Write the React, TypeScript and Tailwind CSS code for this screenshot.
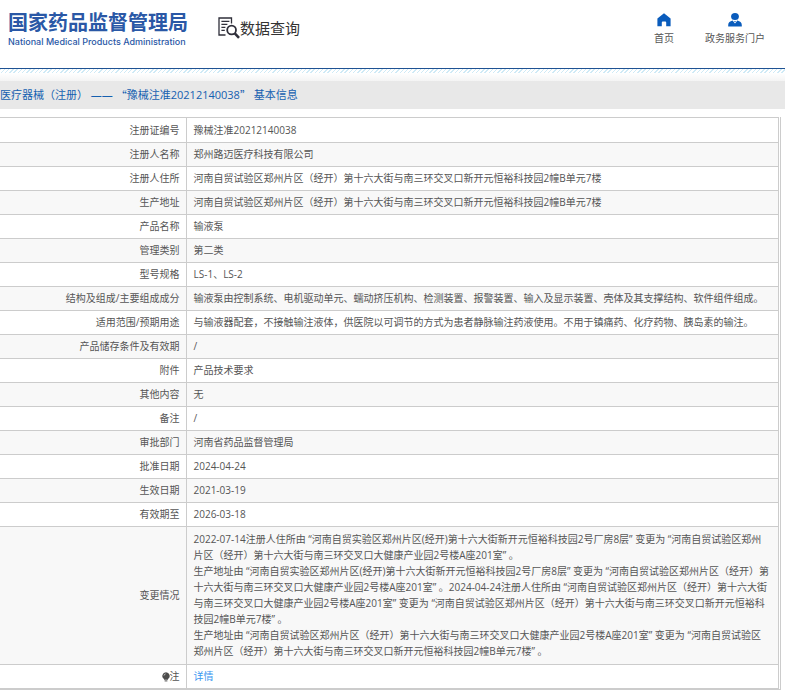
type Row = {
  label: string;
  value: string[];
};

const rows: Row[] = [
  { label: '注册证编号', value: ['豫械注准20212140038'] },
  { label: '注册人名称', value: ['郑州路迈医疗科技有限公司'] },
  { label: '注册人住所', value: ['河南自贸试验区郑州片区（经开）第十六大街与南三环交叉口新开元恒裕科技园2幢B单元7楼'] },
  { label: '生产地址', value: ['河南自贸试验区郑州片区（经开）第十六大街与南三环交叉口新开元恒裕科技园2幢B单元7楼'] },
  { label: '产品名称', value: ['输液泵'] },
  { label: '管理类别', value: ['第二类'] },
  { label: '型号规格', value: ['LS-1、LS-2'] },
  {
    label: '结构及组成/主要组成成分',
    value: ['输液泵由控制系统、电机驱动单元、蠕动挤压机构、检测装置、报警装置、输入及显示装置、壳体及其支撑结构、软件组件组成。'],
  },
  {
    label: '适用范围/预期用途',
    value: ['与输液器配套，不接触输注液体，供医院以可调节的方式为患者静脉输注药液使用。不用于镇痛药、化疗药物、胰岛素的输注。'],
  },
  { label: '产品储存条件及有效期', value: ['/'] },
  { label: '附件', value: ['产品技术要求'] },
  { label: '其他内容', value: ['无'] },
  { label: '备注', value: ['/'] },
  { label: '审批部门', value: ['河南省药品监督管理局'] },
  { label: '批准日期', value: ['2024-04-24'] },
  { label: '生效日期', value: ['2021-03-19'] },
  { label: '有效期至', value: ['2026-03-18'] },
  {
    label: '变更情况',
    value: [
      '2022-07-14注册人住所由 “河南自贸实验区郑州片区(经开)第十六大街新开元恒裕科技园2号厂房8层” 变更为 “河南自贸试验区郑州片区（经开）第十六大街与南三环交叉口大健康产业园2号楼A座201室” 。',
      '生产地址由 “河南自贸实验区郑州片区(经开)第十六大街新开元恒裕科技园2号厂房8层” 变更为 “河南自贸试验区郑州片区（经开）第十六大街与南三环交叉口大健康产业园2号楼A座201室” 。2024-04-24注册人住所由 “河南自贸试验区郑州片区（经开）第十六大街与南三环交叉口大健康产业园2号楼A座201室” 变更为 “河南自贸试验区郑州片区（经开）第十六大街与南三环交叉口新开元恒裕科技园2幢B单元7楼” 。',
      '生产地址由 “河南自贸试验区郑州片区（经开）第十六大街与南三环交叉口大健康产业园2号楼A座201室” 变更为 “河南自贸试验区郑州片区（经开）第十六大街与南三环交叉口新开元恒裕科技园2幢B单元7楼” 。',
    ],
  },
];

function HomeIcon() {
  return (
    <svg width="14" height="14" viewBox="0 0 14 14" fill="#0a5cbc" aria-hidden="true">
      <path d="M7 0.3 13.6 5.4V13.3H9.2V9.6a1 1 0 0 0-1-1H5.8a1 1 0 0 0-1 1v3.7H0.4V5.4z" />
    </svg>
  );
}

function UserIcon() {
  return (
    <svg width="14" height="14" viewBox="0 0 14 14" fill="#0a5cbc" aria-hidden="true">
      <ellipse cx="7" cy="3.6" rx="3.9" ry="3.5" />
      <path d="M0.2 13.6V12C0.2 9.8 2 8.2 4.6 7.6L7 10.4 9.4 7.6C12 8.2 13.8 9.8 13.8 12v1.6z" />
      <path d="M6 7.9h2L7 9.3z" />
    </svg>
  );
}

function SearchDocIcon() {
  return (
    <svg width="22" height="22" viewBox="0 0 22 22" fill="none" stroke="#2f2f3a" aria-hidden="true">
      <path d="M13.5 6.5V1H1v17h6.5" strokeWidth="1.3" />
      <path d="M3.4 4.4h8M3.4 7.4h6M3.4 10.4h4M3.4 13.4h3.4" strokeWidth="1.3" />
      <circle cx="13.6" cy="13" r="4.4" strokeWidth="1.8" />
      <path d="M16.8 16.4 21 20.8" strokeWidth="2.6" />
    </svg>
  );
}

function BulbIcon() {
  return (
    <svg className="inline-block" width="8" height="10" viewBox="0 0 8 10" aria-hidden="true">
      <path d="M4 0.3a3.7 3.7 0 0 1 2 6.8v0.7H2V7.1A3.7 3.7 0 0 1 4 0.3z" fill="#4c4c4c" />
      <path d="M2.6 8.9h2.8" stroke="#4c4c4c" />
      <path d="M2 3.6a2 2 0 0 1 1.6-1.7" stroke="#ddd" strokeWidth="0.8" fill="none" />
    </svg>
  );
}

export default function App() {
  return (
    <div className="min-h-screen overflow-x-hidden bg-white font-['Open_Sans','Noto_Sans_CJK_SC',sans-serif] text-[10px] leading-4 text-[#555]">
      <header className="flex h-[69px] items-start justify-between border-b border-[#1f5293] pr-5 pl-2">
        <div className="flex items-start gap-[30px]">
          <a href="#" className="block pt-[9px] text-[#2a58a6]">
            <span className="block text-[20px] leading-7 font-bold whitespace-nowrap">国家药品监督管理局</span>
            <span className="block font-[Inter,sans-serif] text-[9px] leading-[10px] font-medium whitespace-nowrap">
              National Medical Products Administration
            </span>
          </a>
          <h1 className="flex items-center pt-4 text-[15px] leading-6 whitespace-nowrap text-[#333]">
            <SearchDocIcon />
            数据查询
          </h1>
        </div>
        <nav className="flex gap-[31px] pt-[13px]">
          <a href="#" className="flex flex-col items-center gap-[3px] whitespace-nowrap">
            <HomeIcon />
            首页
          </a>
          <a href="#" className="flex flex-col items-center gap-[3px] whitespace-nowrap">
            <UserIcon />
            政务服务门户
          </a>
        </nav>
      </header>
      <div className="h-1 bg-[repeating-linear-gradient(135deg,#cfeaf6_0px,#cfeaf6_1px,#fff_1px,#fff_3px)]" />
      <div className="h-2 bg-linear-to-b from-white to-[#f4f4f4]" />
      <h2 className="flex h-7 items-center bg-[#e8e8e8] text-[11px] leading-4 whitespace-pre text-[#1560b0]">
        医疗器械（注册） —— <span className="font-['Noto_Sans_CJK_SC',sans-serif]">“</span>豫械注准20212140038
        <span className="font-['Noto_Sans_CJK_SC',sans-serif]">”</span> 基本信息
      </h2>

      <main className="pt-2 pr-1">
        <div className="border-r border-b border-[#ccc] pr-px">
          <table className="w-full border-collapse border-t border-r border-b border-[#ccc]">
            <tbody>
              {rows.map((row) => (
                <tr key={row.label} className="border-b border-[#ccc] first:h-[25px] even:bg-[#f8f8f8]">
                  <th scope="row" className="h-6 w-[186px] border-r border-[#ccc] pr-[6px] pb-px text-right font-normal whitespace-nowrap">
                    {row.label}
                  </th>
                  <td className={row.value.length > 1 ? 'pt-1 pr-2 pb-[5px] pl-[7px]' : 'pr-2 pb-px pl-[7px]'}>
                    {row.value.map((text) => (
                      <p key={text}>{text}</p>
                    ))}
                  </td>
                </tr>
              ))}
              <tr>
                <th scope="row" className="h-6 border-r border-[#ccc] pr-[6px] pb-px text-right font-normal">
                  <BulbIcon />注
                </th>
                <td className="pr-2 pb-px pl-[7px]">
                  <a href="#" className="text-[#3b97f0]">
                    详情
                  </a>
                </td>
              </tr>
            </tbody>
          </table>
        </div>
      </main>
    </div>
  );
}
